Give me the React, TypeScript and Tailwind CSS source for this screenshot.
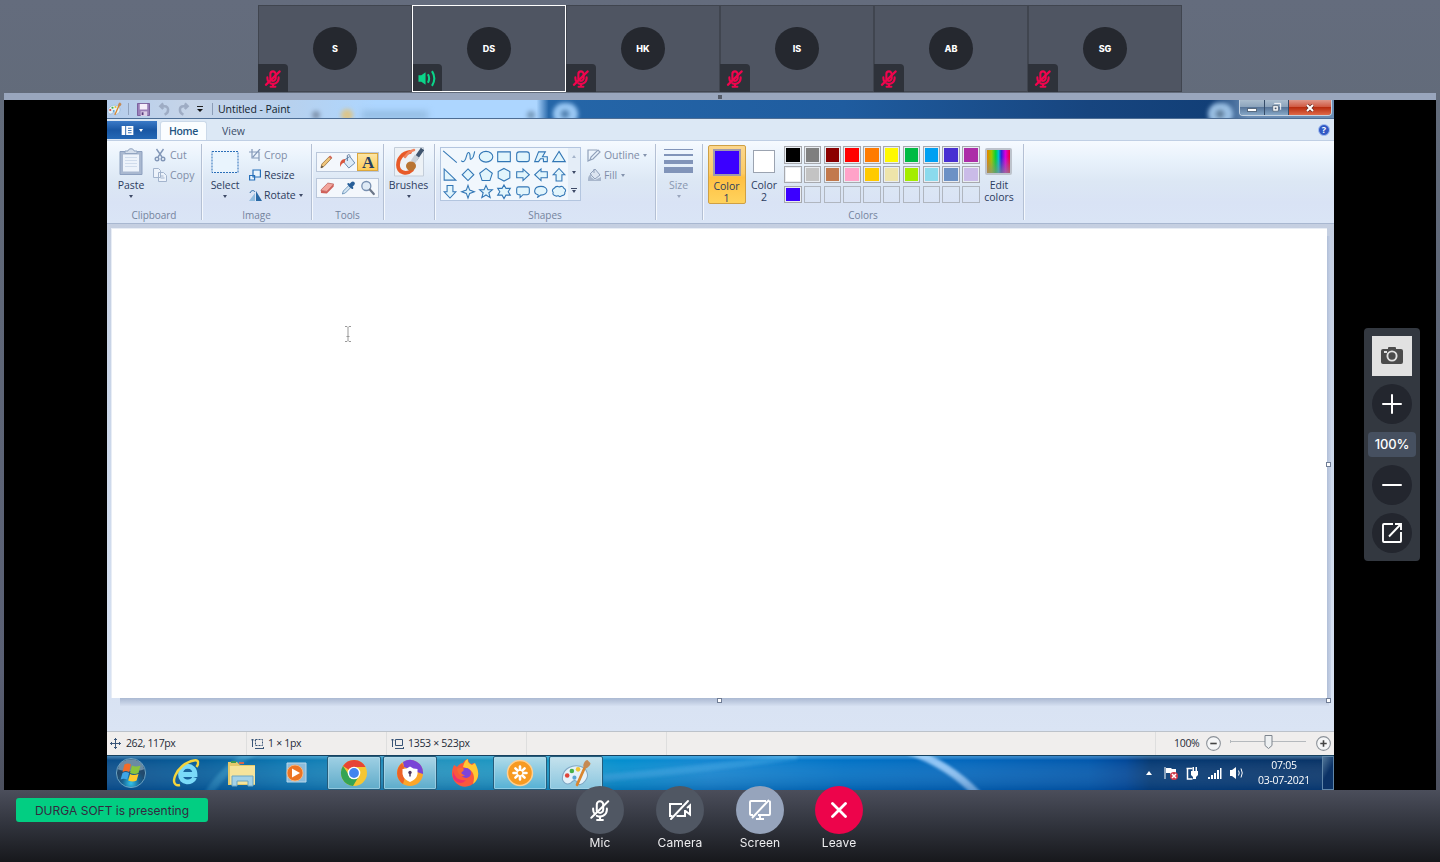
import type { ReactNode } from "react";

const PAINT_FONT = "font-['Open_Sans','Noto_Sans',sans-serif]";

function MicOff({ className, strokeWidth = 2 }: { className: string; strokeWidth?: number }) {
  return (
    <svg viewBox="0 0 24 24" fill="none" stroke="currentColor" strokeWidth={strokeWidth} strokeLinecap="round" className={className}>
      <path d="M8.5 13V6a3.5 3.5 0 0 1 7 0v5.5a3.5 3.5 0 0 1-5.5 3" />
      <path d="M4.5 10.5v1c0 2 .6 3.5 1.7 4.7M19.500 10.500v1.500a7.500 7.500 0 0 1-11 6.300" />
      <path d="M12 19.500V23M8.800 23h6.400M2.500 20.500 21 2.500" />
    </svg>
  );
}

function Tile({ name, active }: { name: string; active?: boolean }) {
  return (
    <div className={`relative flex h-[87px] w-[154px] items-center justify-center border bg-[#4f5562] ${active ? "border-white" : "border-[#40454f]"}`}>
      <div className="flex h-[43px] w-[44px] items-center justify-center rounded-full bg-[#25282f] pt-px text-[9px] font-extrabold text-white">
        {name}
      </div>
      <div className={`absolute flex items-center justify-center rounded-tr bg-[#2e323a] ${active ? "bottom-0 left-0 h-[27px] w-[29px] pr-[2px] pt-[2px]" : "-bottom-px -left-px h-[28px] w-[30px] pt-px"}`}>
        {active ? (
          <svg viewBox="0 0 20 18" className="h-[17px] w-[19px]" fill="none" stroke="#0bd489" strokeWidth="2.2">
            <path d="M1.500 5.500h3L9 2.500v13l-4.500-3h-3z" fill="#0bd489" stroke="none" />
            <path d="M11.500 4.500c1.600 2.800 1.600 6.200 0 9M15.800 1.200c3 4.700 3 10.900 0 15.600" />
          </svg>
        ) : (
          <MicOff className="h-[19px] w-[18px] text-[#f0054d]" strokeWidth={2.8} />
        )}
      </div>
    </div>
  );
}

function Arrow({ className = "border-t-[#3d4a66]" }: { className?: string }) {
  return <span className={`inline-block h-0 w-0 border-x-[2.5px] border-t-[3px] border-x-transparent ${className}`} />;
}

function Group({ label, width, children }: { label: string; width: string; children: ReactNode }) {
  return (
    <div className={`flex h-[76px] shrink-0 flex-col ${width} border-r border-[#b4c0d4] shadow-[1px_0_0_#f4f8fd]`}>
      <div className="flex h-[66px] items-start">{children}</div>
      <div className="flex h-[10px] items-center justify-center text-[10px] leading-none text-[#74839d]">{label}</div>
    </div>
  );
}

const shapes: ReactNode[] = [
  <path d="m2 3 14 12" />,
  <path d="M2 13c3 3 4.500-1 5.500-5s3-4.500 3.500-1-.5 6 2 4 2-6 3-7.500" />,
  <ellipse cx="9" cy="9" rx="7" ry="5.500" />,
  <path d="M2.500 4h13v10h-13z" />,
  <rect x="2.500" y="4" width="13" height="10" rx="2.500" />,
  <path d="M2.500 14 6.500 4h7l-3 5h5v5h-4v-3h-3l-2 3z" />,
  <path d="M9 3.500 15.500 14h-13z" />,
  <path d="M3 3v11.500h12z" />,
  <path d="m9 3 6 6-6 6-6-6z" />,
  <path d="m9 2.500 6.500 5L13 15H5L2.500 7.500z" />,
  <path d="m9 2.500 6 3.300v6.400l-6 3.300-6-3.300V5.800z" />,
  <path d="M2.500 6H9V3l6.500 6L9 15v-3H2.500z" />,
  <path d="M15.500 6H9V3L2.500 9 9 15v-3h6.500z" />,
  <path d="M6 15.500V9H3l6-6.500L15 9h-3v6.500z" />,
  <path d="M6 2.500V9H3l6 6.500L15 9h-3V2.500z" />,
  <path d="m9 2.500 1.700 4.800L15.500 9l-4.800 1.700L9 15.500l-1.700-4.800L2.500 9l4.800-1.700z" />,
  <path d="m9 2.500 2 4.500h4.500l-3.600 3 1.400 5L9 12.300 4.700 15l1.400-5-3.600-3H7z" />,
  <path d="m9 2 2 3.500h4.500L13.300 9l2.200 3.500H11L9 16l-2-3.500H2.500L4.700 9 2.500 5.500H7z" />,
  <path d="M4.500 4h9q2 0 2 2v4q0 2-2 2H9l-3 3v-3H4.500q-2 0-2-2V6q0-2 2-2z" />,
  <path d="M5 15c1-1 1.500-2 1-2.800C.5 10.500 1.500 3.500 9 3.500s9 8.500-.5 9C7.500 13 6.500 14.500 5 15z" />,
  <path d="M5 13q-3-.5-2-3.500Q1 7 4 5.500 6 2.500 9 4q4-1.500 5 1.500 3 1.500 1 4 .5 3-3 3.500-2 2-4 0-1.500 1-3 0z" />,
];

const swatches = [
  "bg-black", "bg-[#7f7f7f]", "bg-[#8b0000]", "bg-[#ff0000]", "bg-[#ff7b00]", "bg-[#fff900]", "bg-[#00bb44]", "bg-[#00a0f2]", "bg-[#472fd2]", "bg-[#ac2da8]",
  "bg-white", "bg-[#c3c3c3]", "bg-[#c2794d]", "bg-[#ffa2c8]", "bg-[#ffca00]", "bg-[#eee4aa]", "bg-[#a4ed00]", "bg-[#8bdaed]", "bg-[#6c91c5]", "bg-[#cabbe8]",
  "bg-[#3b00ff]", "", "", "", "", "", "", "", "", "",
];

function PaletteIcon({ className }: { className: string }) {
  return (
    <svg viewBox="0 0 30 28" className={className}>
      <path d="M2 17C3 9 12 5 19 7c7 2 9 9 5 14-3 4-7 5-8 2-1-4-4-2-6 0-4 3-9-1-8-6z" fill="#e4f1f9" stroke="#7fa7c4" />
      <circle cx="6.500" cy="16" r="2.200" fill="#e0453a" />
      <circle cx="11" cy="11.500" r="2.200" fill="#46b04a" />
      <circle cx="17" cy="10" r="2.200" fill="#f0c435" />
      <circle cx="13.500" cy="18" r="2" fill="#5aa4d4" />
      <path d="m24 7-8 18" stroke="#d9862f" strokeWidth="2.600" strokeLinecap="round" />
      <path d="M22 7c0-3 2-6 4-6l3 3c0 2-3 5-5 5z" fill="#c58a54" />
    </svg>
  );
}

function TitleBar() {
  return (
    <div className="relative flex h-[19px] items-center overflow-hidden border-b border-[#4d6d94] bg-[linear-gradient(90deg,#b5cdec_0,#c7d5e8_7%,#b7d1ee_15%,#add6ff_22%,#add6ff_35%,#2566a8_36%,#1f5c9f_60%,#17457f_80%,#123f77_90%,#6a8db5_93%)]">
      <div className="absolute left-[205px] top-[11px] h-2 w-2 rounded-full bg-[#7f93ad] blur-[2px]" />
      <div className="absolute left-[234px] top-[9px] h-3 w-3 rounded-full bg-[#dbc58b] blur-[2px]" />
      <div className="absolute left-[255px] top-[11px] h-2 w-[66px] bg-[#94bce2] blur-[3px]" />
      <div className="absolute left-[420px] top-[11px] h-2 w-2 rounded-full bg-[#7699bb] blur-[2px]" />
      <div className="absolute left-[446px] top-[3px] h-[22px] w-[25px] rounded-full bg-[#9bc9f5] blur-[2px]" />
      <div className="absolute left-[454px] top-[10px] h-2 w-2 rounded-full bg-[#507fae] blur-[2px]" />
      <div className="absolute left-[1101px] top-[3px] h-[22px] w-[25px] rounded-full bg-[#9bc0e4] blur-[2px]" />
      <div className="absolute left-[1109px] top-[10px] h-2 w-2 rounded-full bg-[#5f7d9a] blur-[2px]" />
      <div className="relative flex flex-1 items-center">
        <PaletteIcon className="h-[16px] w-[15px]" />
        <span className="ml-1.5 h-3 w-px bg-[#91a3be]" />
        <svg viewBox="0 0 14 14" className="ml-[8px] h-[13px] w-[13px]">
          <path d="M.5.500h13v13H.500z" fill="#9a7fb8" stroke="#765a97" />
          <path d="M3 1h8v6H3z" fill="#f6effb" /><path d="M4 9h7v5H4z" fill="#ddcfe8" /><path d="M5 10h2v3H5z" fill="#5a3a7d" />
        </svg>
        <svg viewBox="0 0 34 14" className="ml-2 h-3.5 w-[32px]" fill="none" stroke="#9eacc4" strokeWidth="2.600">
          <path d="M2 4h5c5 0 5 7 0 9M5.500 1 2.500 4l3 3M32 4h-5c-5 0-5 7 0 9M28.500 1l3 3-3 3" />
        </svg>
        <svg viewBox="0 0 8 8" className="ml-[6px] h-2 w-2"><path d="M1 1.500h6" stroke="#222" /><path d="M1 4h6L4 7z" fill="#111" /></svg>
        <span className="ml-[8px] h-3 w-px bg-[#8c9db7]" />
        <span className="ml-[5px] mt-px whitespace-nowrap text-[10.5px] font-medium leading-none tracking-[-0.05px] text-[#111d2c]">Untitled - Paint</span>
      </div>
      <div className="relative mr-[2px] flex h-4 self-start overflow-hidden rounded-b border border-t-0 border-[#c5d3e1]">
        <div className="flex w-[25px] items-center justify-center border-r border-[#354c69] bg-[linear-gradient(#aabdce_0,#8ca4bc_45%,#58769a_50%,#86a7c6)]"><span className="mt-1 h-1 w-[10px] border border-[#586b80] bg-white" /></div>
        <div className="flex w-6 items-center justify-center border-r border-[#354c69] bg-[linear-gradient(#aabdce_0,#8ca4bc_45%,#58769a_50%,#86a7c6)]">
          <svg viewBox="0 0 12 12" className="h-[11px] w-[11px]" fill="none"><path d="M3.500 1.500h7v7" stroke="#fff" /><path d="M2 4h6v6H2z" fill="#fff" stroke="#46586d" strokeWidth=".8" /><path d="M4 6h2v2H4z" fill="#46586d" /></svg>
        </div>
        <div className="flex w-[42px] items-center justify-center bg-[linear-gradient(#df978a_0,#d05a43_45%,#b92d10_50%,#df6948)]"><svg viewBox="0 0 10 8" className="h-2 w-[10px]"><path d="m2 1 6 6m0-6L2 7" stroke="#6c2d26" strokeWidth="3.500" /><path d="m2 1 6 6m0-6L2 7" stroke="#fff" strokeWidth="2" /></svg></div>
      </div>
    </div>
  );
}

function Ribbon() {
  return (
    <div className="flex h-[84px] items-start border-b border-[#a8b7d0] border-t border-t-[#c0cfe4] bg-[linear-gradient(#f6faff_0,#e7f1fb_25%,#dce7f4_50%,#d9e3f5_75%,#dae5f6)] pt-[3px] text-[10.5px] font-medium leading-none tracking-[-0.05px] text-[#2c3c5e]">
      <Group label="Clipboard" width="w-[95px]">
        <div className="ml-px flex w-[46px] flex-col items-center pt-[3px]">
          <svg viewBox="0 0 24 28" className="h-[29px] w-6">
            <path d="M1 4h22v23H1z" fill="#a9b8d0" stroke="#8da0bf" /><path d="M4 7h16v17H4z" fill="#edf3fb" /><path d="M6 10h12M6 13h12M6 16h12M6 19h12" stroke="#d0dcec" /><path d="M6 6V3.500h3C9 .5 15 .5 15 3.500h3V6z" fill="#d4deec" stroke="#91a4c0" />
          </svg>
          <span className="mt-1">Paste</span><Arrow className="mt-[4px] border-t-[#3d4a66]" />
        </div>
        <div className="flex flex-col text-[#7f8da7]">
          <div className="mt-[4px] flex h-[14px] items-center"><svg viewBox="0 0 12 14" className="h-3.5 w-3" fill="none" stroke="#8297b8" strokeWidth="1.400"><path d="M2.500 1 8 9M9.500 1 4 9" /><circle cx="3" cy="11" r="1.800" /><circle cx="9" cy="11" r="1.800" /></svg><span className="ml-1">Cut</span></div>
          <div className="mt-[6px] flex h-[14px] items-center"><svg viewBox="0 0 14 14" className="-ml-px h-3.5 w-[14px]" fill="#edf3fb" stroke="#a3b4cd"><path d="M.5.500h5l2 2v7h-7zM5.500 4.500h5l3 3v6h-8z" /><path d="M7.500 8h3M7.500 10h4" /></svg><span className="ml-[3px]">Copy</span></div>
        </div>
      </Group>
      <Group label="Image" width="w-[110px]">
        <div className="flex w-[46px] flex-col items-center pt-[6px]">
          <svg viewBox="0 0 28 24" className="h-6 w-7"><path d="M1 1.500h26v21H1z" fill="#e9f4fd" stroke="#2a6eb8" strokeDasharray="2 1" /></svg>
          <span className="mt-[6px]">Select</span><Arrow className="mt-[4px] border-t-[#3d4a66]" />
        </div>
        <div className="flex flex-col pl-px">
          <div className="mt-[4px] flex h-[14px] items-center text-[#7f8da7]"><svg viewBox="0 0 12 12" className="h-3 w-3" fill="none" stroke="#8499b8" strokeWidth="1.200"><path d="M3 0v9h7V3H0M4 8l7-8M10 9v3" /></svg><span className="ml-[3px]">Crop</span></div>
          <div className="mt-[6px] flex h-[14px] items-center"><svg viewBox="0 0 12 12" className="h-3 w-3" fill="#e9f4fd" stroke="#2770b9" strokeWidth="1.200"><path d="M4 1h7.400v7H4zM.6 6.500h5v4.500h-5z" /></svg><span className="ml-[3px]">Resize</span></div>
          <div className="mt-[6px] flex h-[14px] items-center"><svg viewBox="0 0 14 13" className="h-[13px] w-[14px]"><path d="M6 4v8H0z" fill="#91bddf" /><path d="M7 2v10h6z" fill="#2869a5" /><path d="M1 4c1-3 4-3 5-1" fill="none" stroke="#2869a5" /></svg><span className="ml-px">Rotate</span><Arrow className="ml-[3px] border-t-[#3d4a66]" /></div>
        </div>
      </Group>
      <Group label="Tools" width="w-[72px]">
        <div className="flex flex-col gap-[6px] pl-1 pt-2">
          <div className="flex h-[20px] w-[63px] border border-[#bac7da] bg-[#f3f7fc]">
            <svg viewBox="0 0 20 18" className="h-[18px] w-5"><path d="m4 15 1-4 8-8 2 2-8 8.500z" fill="#efc57b" stroke="#96703b" strokeWidth=".8" /><path d="m4 15 .8-2.500L6.500 14z" fill="#444" /><path d="m12 4 1.500-1.500 2 2L14 6z" fill="#d46a5c" /></svg>
            <svg viewBox="0 0 20 18" className="h-[18px] w-[21px]"><path d="m5.500 8 7-4.500 5 6.500-6 5z" fill="#dcebf8" stroke="#6f8db0" /><path d="M10 8V3c0-2 3-1.500 3 .5" fill="none" stroke="#5b799e" /><path d="M8 6C4 6 2 9 3 14c1-3 2-4 4.500-4.500z" fill="#da573e" /></svg>
            <div className="flex w-[21px] items-center justify-center border border-[#dba73d] bg-[linear-gradient(#fce5a4,#ffcb55)] pl-px pt-px font-['Liberation_Serif',serif] text-[17px] font-bold text-[#263e60]">A</div>
          </div>
          <div className="flex h-[20px] w-[63px] border border-[#bac7da] bg-[#f3f7fc]">
            <svg viewBox="0 0 20 18" className="h-[18px] w-5"><path d="m4 11 7-7 6 1-7 7.500-6-1z" fill="#f3a59c" stroke="#bd6661" strokeWidth=".8" /><path d="m4 11.500 6 1 7-7.500v2.500l-7 7-6-.5z" fill="#cf6059" /></svg>
            <svg viewBox="0 0 20 18" className="h-[18px] w-[21px]"><path d="m5 15 1-3 6-6 2 2-6 6z" fill="#d3e5f3" stroke="#6c94b9" strokeWidth=".9" /><path d="m11 5 4 4" stroke="#285f99" strokeWidth="2" strokeLinecap="round" /><path d="m13.500 6.500 2-2" stroke="#285f99" strokeWidth="4" strokeLinecap="round" /></svg>
            <svg viewBox="0 0 20 18" className="h-[18px] w-[21px]"><circle cx="9" cy="7" r="4.500" fill="#dfeaf5" stroke="#7890b1" strokeWidth="1.300" /><path d="m12.500 10.500 4 4.500" stroke="#6c7789" strokeWidth="2.200" strokeLinecap="round" /></svg>
          </div>
        </div>
      </Group>
      <Group label="" width="w-[51px]">
        <div className="flex w-[49px] flex-col items-center pt-[3px]">
          <svg viewBox="0 0 30 30" className="h-[30px] w-[30px]"><path d="M.5.500h29v28.500H.500z" fill="#edf2f6" stroke="#c3cdd9" /><path d="M16 5C8 6 4 12 4 18c0 8 9 10 14 5" fill="none" stroke="#e85a28" strokeWidth="3.800" strokeLinecap="round" /><path d="M20 3c-5 1-7 4-9 7" fill="none" stroke="#f0845e" strokeWidth="2.500" strokeLinecap="round" /><path d="m28.500 2-7 10" stroke="#41566f" strokeWidth="4" /><path d="m23 9-4 6" stroke="#c9d1d9" strokeWidth="5" /><ellipse cx="17" cy="19" rx="5" ry="4.500" fill="#b97532" /></svg>
          <span className="mt-[3px]">Brushes</span><Arrow className="mt-[4px] border-t-[#3d4a66]" />
        </div>
      </Group>
      <Group label="Shapes" width="w-[221px]">
        <div className="ml-[5px] mt-[3px] flex h-[54px] w-[141px] border border-[#b3c5df] bg-[#f1f7fd]">
          <div className="grid w-[127px] grid-cols-7">
            {shapes.map((s, i) => (
              <svg key={i} viewBox="0 0 18 18" className="h-[17.5px] w-[18px]" fill="#e2f5fc" stroke="#3276b5" strokeWidth="1.100">{s}</svg>
            ))}
          </div>
          <div className="flex w-3 flex-col items-center justify-around bg-[#e4edf7]">
            <Arrow className="rotate-180 border-t-[#a5b4ca]" /><Arrow /><span className="flex flex-col items-center gap-px"><i className="h-px w-[6px] bg-[#3d4a66]" /><Arrow /></span>
          </div>
        </div>
        <div className="flex flex-col pl-[6px] text-[#7f8da7]">
          <div className="mt-[4px] flex h-[14px] items-center"><svg viewBox="0 0 14 13" className="h-[13px] w-[14px]" fill="none" stroke="#91a1ba" strokeWidth="1.200"><path d="M10 1H1v11l2-1" /><path d="m3 11 1-3 7-7 2 2-7 7z" /></svg><span className="ml-[3px]">Outline</span><Arrow className="ml-[3px] border-t-[#8493ad]" /></div>
          <div className="mt-[6px] flex h-[14px] items-center"><svg viewBox="0 0 15 14" className="h-3.5 w-[15px]" fill="#dce5f1" stroke="#91a1ba"><path d="m3 6 5-5 5 6-5 4zM7 5V1" /><path d="M1 11c0-3 2-5 4-5l-1 3 4 3 6-3v4H1z" fill="#a9b7cc" stroke="none" /></svg><span className="ml-[2px]">Fill</span><Arrow className="ml-1 border-t-[#8493ad]" /></div>
        </div>
      </Group>
      <Group label="" width="w-[47px]">
        <div className="flex w-[45px] flex-col items-center pt-[4px] text-[#8997b0]">
          <div className="flex h-[29px] w-[29px] flex-col"><i className="mt-px h-px bg-[#8194b9]" /><i className="mt-[4px] h-[2px] bg-[#8194b9]" /><i className="mt-[4px] h-[4px] bg-[#8194b9]" /><i className="mt-[3px] h-[6px] bg-[#8194b9]" /></div>
          <span className="mt-[3px]">Size</span><Arrow className="mt-[4px] border-t-[#9aa6bd]" />
        </div>
      </Group>
      <Group label="Colors" width="w-[321px]">
        <div className="ml-[5px] mt-px flex h-[59px] w-[38px] shrink-0 flex-col items-center rounded-[2px] border border-[#cfa044] bg-[linear-gradient(#fbd78e_0,#fcca65_48%,#ffc043_55%,#ffd35d)] pr-px pt-[3px]">
          <div className="h-[28px] w-[28px] border-2 border-[#a09aaa] bg-[#3b00ff]" />
          <span className="mt-[5px]">Color</span><span className="mt-px">1</span>
        </div>
        <div className="flex w-[36px] shrink-0 flex-col items-center pt-[6px]">
          <div className="h-[23px] w-[22px] border border-[#9ba3b0] bg-white" />
          <span className="mt-[7px]">Color</span><span className="mt-px">2</span>
        </div>
        <div className="ml-[2px] mt-[2px] grid grid-cols-[repeat(10,19.8px)] gap-y-[2.3px]">
          {swatches.map((c, i) => (
            <div key={i} className={`h-[17.5px] w-[17.5px] border p-px ${c ? "border-[#a7a9ae] bg-[#e9edf2]" : "border-[#b0b6bf]"}`}><div className={`h-full w-full ${c}`} /></div>
          ))}
        </div>
        <div className="flex w-[34px] flex-col items-center pt-1">
          <div className="h-[27px] w-[27px] rounded-[2px] border-2 border-[#bdc3cc] bg-[linear-gradient(180deg,transparent_30%,#8c8c8caa),linear-gradient(90deg,#e98100,#9ac700_20%,#00d23b_38%,#00bfcf_50%,#2c22d8_62%,#db00df_80%,#ef0030)]" />
          <span className="mt-[5px]">Edit</span><span className="mt-px">colors</span>
        </div>
      </Group>
    </div>
  );
}

function StatusBar() {
  return (
    <div className="flex h-[24px] items-center border-t border-[#bcc2ca] bg-[#f0eeed] text-[10.5px] font-medium leading-none text-[#252b38]">
      <div className="flex h-full w-[140px] items-center border-r border-[#dedede] pl-[3px]">
        <svg viewBox="0 0 11 11" className="h-[11px] w-[11px]" stroke="#385477" fill="none"><path d="M5.500 0v11M0 5.500h11M4 2l1.500-1.500L7 2M4 9l1.500 1.500L7 9M2 4 .5 5.500 2 7M9 4l1.500 1.500L9 7" /></svg>
        <span className="ml-[5px] tracking-[-0.4px]">262, 117px</span>
      </div>
      {["1 × 1px", "1353 × 523px"].map((t, i) => (
        <div key={t} className="flex h-full w-[140px] items-center border-r border-[#dedede] pl-[4px]">
          <svg viewBox="0 0 13 11" className="h-[11px] w-[13px]" stroke="#385477" fill="none"><path d="M1.500 9V1M0 2.500 1.500 1 3 2.500M4 10.500h8" /><path d="M4.500 1.500h7v6h-7z" strokeDasharray={i ? undefined : "2 1"} /><path d="M12.500 9v2" /></svg>
          <span className="ml-1 tracking-[-0.3px]">{t}</span>
        </div>
      ))}
      <div className="h-full w-[140px] border-r border-[#dedede]" />
      <div className="h-full flex-1 border-r border-[#dedede]" />
      <div className="flex w-[178px] items-center pl-[18px]">
        <span className="w-[27px] tracking-[-0.3px]">100%</span>
        <svg viewBox="0 0 14 14" className="ml-[5px] h-[15px] w-[15px]" fill="#f5f6f7" stroke="#8b9198"><circle cx="7" cy="7" r="6.400" /><path d="M4 7h6" stroke="#444" strokeWidth="1.500" /></svg>
        <svg viewBox="0 0 76 16" className="-mt-[3px] ml-[9px] h-4 w-[76px]"><path d="M.5 6v3M0 7.500h76" stroke="#b5b9bd" /><path d="M35 1.500h7v10l-3.500 3-3.500-3z" fill="#edf0f2" stroke="#7d848d" /></svg>
        <svg viewBox="0 0 14 14" className="ml-[10px] h-[15px] w-[15px]" fill="#f5f6f7" stroke="#8b9198"><circle cx="7" cy="7" r="6.400" /><path d="M4 7h6M7 4v6" stroke="#444" strokeWidth="1.500" /></svg>
      </div>
    </div>
  );
}

function TaskButton({ children, className }: { children: ReactNode; className: string }) {
  return <div className={`flex h-[34px] w-[54px] items-center justify-center rounded-[2px] border border-[#245c7b] shadow-[inset_0_0_0_1px_#b4dcec99] ${className}`}>{children}</div>;
}

function Taskbar() {
  return (
    <div className="relative flex h-[35px] items-center border-t border-[#17415f] bg-[linear-gradient(90deg,#0c4f8b_0,#075f9c_8%,#0e7ab4_15%,#2692bd_25%,#1b9ac5_35%,#058fcf_42%,#1687d2_49%,#0373c6_60%,#0568bd_70%,#0359ad_80%,#03499a_83%,#063a74_85%,#0a3467_100%)]">
      <svg viewBox="0 0 1227 34" className="absolute inset-0 h-[34px] w-full" preserveAspectRatio="none">
        <defs>
          <linearGradient id="shade" x2="0" y2="1"><stop offset="0" stopColor="#9fe0ff" stopOpacity=".35" /><stop offset=".12" stopColor="#fff" stopOpacity="0" /><stop offset="1" stopColor="#003b80" stopOpacity=".3" /></linearGradient>
          <filter id="soft" x="-20%" y="-50%" width="140%" height="200%"><feGaussianBlur stdDeviation="1.7" /></filter>
        </defs>
        <g fill="none" filter="url(#soft)">
          <path d="M800-6q42 14 72 46" stroke="#8fc4f5" strokeWidth="8" />
          <path d="M496 22Q590 14 690 0" stroke="#3aa2e2" strokeWidth="7" opacity=".55" />
          <path d="M100 40q18-30 50-46" stroke="#4ab0d8" strokeWidth="8" opacity=".4" />
        </g>
        <path d="M0 0h1227v34H0z" fill="url(#shade)" />
      </svg>
      <div className="relative flex w-full items-center">
        <svg viewBox="0 0 34 34" className="ml-[7px] h-8 w-[34px]">
          <defs><radialGradient id="orb" cy=".85"><stop stopColor="#32c4ec" /><stop offset=".6" stopColor="#166090" /><stop offset="1" stopColor="#224a6d" /></radialGradient></defs>
          <circle cx="17" cy="17" r="15.500" fill="url(#orb)" stroke="#6ea5c4" /><path d="M3 13C6-1 28-1 31 13c-8 3-20 3-28 0z" fill="#d9eef8" opacity=".4" />
          <path d="M10 8q4-2 7 0l-2 8q-3-2-7 0z" fill="#f36b27" /><path d="M18 9q4 2 9 0l-2 8q-4 2-9 0z" fill="#8ac43d" /><path d="M8 17q3-2 7 0l-2 7q-4-2-7 0z" fill="#3ea5e7" /><path d="M16 18q3 2 9 0l-2 7q-4 2-9 0z" fill="#fec82e" />
        </svg>
        <svg viewBox="0 0 30 30" className="ml-[23px] h-[30px] w-[30px]"><path d="M23.500 19.500c-2 6-14 6.500-14-3 0-11 14.500-11 14.500 0H10" fill="none" stroke="#7adaf9" strokeWidth="4.800" /><path d="M9 27C-3 30 4 6 23 2.500c5-1 5 3 2.500 6.500" fill="none" stroke="#f5d43b" strokeWidth="2.400" /></svg>
        <svg viewBox="0 0 30 28" className="ml-[26px] h-7 w-[30px]"><path d="M1 3h9l3 3h15v20H1z" fill="#e5ca6b" /><path d="M3 7h25v18H3z" fill="#f5e49c" /><path d="M4 3h5" stroke="#3c9950" strokeWidth="2" /><path d="M12 4h5" stroke="#d6644b" strokeWidth="2" /><path d="M5 27V17h21v10h-5v-5H10v5z" fill="#a3d2e8" stroke="#6aa6c4" /></svg>
        <svg viewBox="0 0 24 24" className="ml-[27px] h-6 w-6"><path d="M3 2h19v19H3z" fill="#8bbcdc" stroke="#b8d7e9" /><circle cx="11" cy="12" r="8" fill="#ec7423" stroke="#f5b67f" /><path d="m8 7.500 8 4.500-8 4.500z" fill="#fff" /></svg>
        <TaskButton className="ml-[19px] bg-[linear-gradient(#9fd0e4,#5fabc9)]">
          <svg viewBox="0 0 28 28" className="h-[28px] w-[28px]"><circle cx="14" cy="14" r="13" fill="#f5c632" /><path d="M3 7a13 13 0 0 1 22.500 1H14v6z" fill="#e64435" /><path d="M3 7a13 13 0 0 0 10 20l6-10-10-1z" fill="#35a454" /><circle cx="14" cy="14" r="6.300" fill="#fff" /><circle cx="14" cy="14" r="4.900" fill="#4285ef" /></svg>
        </TaskButton>
        <TaskButton className="ml-[2px] bg-[linear-gradient(#abd5e7,#5baccb)]">
          <svg viewBox="0 0 28 28" className="h-7 w-7"><circle cx="14" cy="14" r="13" fill="#fba62a" /><path d="M7 3a13 13 0 0 1 20 12l-6-2L8 8z" fill="#7944d7" /><path d="M6 4a13 13 0 0 0 1 21l2-7-1-10z" fill="#ed6227" /><path d="M6.500 10q4.500 0 7.500-2.500 3 2.500 7.500 2.500v5q-1 5.500-7.500 8-6.500-2.500-7.500-8z" fill="#fff" /><circle cx="14" cy="13.500" r="1.700" fill="#4d3960" /><path d="M14 13.500v4" stroke="#4d3960" strokeWidth="1.500" /></svg>
        </TaskButton>
        <svg viewBox="0 0 28 28" className="ml-[14px] h-7 w-7"><path d="M3 6q2 1 3 2 3-4 6-4 1-3 5-4 0 3 3 5l3-1c5 7 6 14 1 19-5 6-14 6-19 1C-1 18 1 10 3 6z" fill="#fa583c" /><path d="M17 0q-1 4 4 6l3-2c5 9 4 17-2 21 3-10-1-15-10-17 1-4 2-7 5-8z" fill="#ffc834" /><path d="M2 12c2 7 6 10 13 9-4 5-10 3-13-2z" fill="#ee306e" /><circle cx="15" cy="14" r="5" fill="#7d44d9" /><path d="M6 10q5-3 7 1l-3 3 4 3q-7 1-8-7z" fill="#f86b32" /></svg>
        <TaskButton className="ml-[14px] bg-[linear-gradient(#b0dbe9,#55b1d5)]">
          <svg viewBox="0 0 28 28" className="h-7 w-7"><circle cx="14" cy="14" r="12.500" fill="#f79a21" stroke="#ffd091" strokeWidth="1.500" /><g stroke="#fff" strokeWidth="2.600" strokeLinecap="round"><path d="M14 7.500v3.200M14 17.300v3.200M7.500 14h3.200M17.300 14h3.200M9.400 9.400l2.300 2.300M16.300 16.300l2.300 2.300M18.600 9.400l-2.300 2.300M11.700 16.300l-2.300 2.300" /></g></svg>
        </TaskButton>
        <TaskButton className="ml-[2px] bg-[linear-gradient(#c5e2ed,#8ac6df)]"><PaletteIcon className="h-[29px] w-[32px]" /></TaskButton>
        <div className="flex-1" />
        <span className="h-0 w-0 border-x-[3.5px] border-b-[4px] border-x-transparent border-b-white" />
        <svg viewBox="0 0 82 18" className="ml-[12px] h-[18px] w-[82px]" fill="#fff">
          <path d="M1 3v12" stroke="#fff" /><path d="M2 4h5l1 1h4v6H7L6 9H2z" /><circle cx="10" cy="12" r="4" fill="#ce394a" /><path d="m8 10 4 4m0-4-4 4" stroke="#fff" strokeWidth="1.500" />
          <path d="M22.500 4.500h6M23.500 4v11h5" fill="none" stroke="#fff" strokeWidth="1.500" /><path d="M27 7h7v4l-2 2v2h-3v-2l-2-2zM28.500 3H30v4h-1.500zM31.500 3H33v4h-1.500z" />
          <path d="M44 13h2v2h-2zM47 11h2v4h-2zM50 9h2v6h-2zM53 6h2v9h-2zM56 4h1.500v11H56z" />
          <path d="M66 6h2l4-3v12l-4-3h-2z" /><path d="M74.500 6.500q1.500 2.500 0 5M77 4.500q2.500 4.500 0 9" stroke="#fff" fill="none" />
        </svg>
        <div className="ml-[8px] flex w-[60px] flex-col items-center gap-[4px] text-[10.5px] leading-[11px] text-white"><span className="tracking-[-0.3px]">07:05</span><span className="whitespace-nowrap tracking-[-0.3px]">03-07-2021</span></div>
        <div className="ml-[8px] h-[34px] w-[12px] border border-[#6086a8] bg-[linear-gradient(120deg,#527799,#0b3266_50%)]" />
      </div>
    </div>
  );
}

function Paint() {
  return (
    <div className={`flex h-[690px] w-[1227px] flex-col ${PAINT_FONT}`}>
      <TitleBar />
      <div className="flex h-[21px] items-end bg-[#dce8f5]">
        <div className="mb-px flex h-[18px] w-[50px] items-center justify-center gap-[5px] bg-[linear-gradient(#3b7ac7,#1957a4_50%,#2468b5)]">
          <svg viewBox="0 0 13 10" className="h-[9px] w-[13px]" fill="#fff"><path d="M0 0h4v10H0zM5 0h8v10H5z" /><path d="M7 2.500h4M7 5h4M7 7.500h4" stroke="#2868b0" /></svg>
          <Arrow className="border-t-white" />
        </div>
        <div className="ml-[3px] flex h-[19px] w-[47px] items-center justify-center rounded-t-[3px] border border-b-0 border-[#cbd9e9] bg-[#fafdff] pt-px text-[10.5px] font-semibold leading-none tracking-[-0.4px] text-[#225481]">Home</div>
        <span className="mb-[4px] ml-[15px] text-[10.5px] font-medium leading-none text-[#3b4e6a]">View</span>
        <div className="mb-[4px] ml-auto mr-[4px] flex h-3 w-3 items-center justify-center rounded-full border border-[#a6c1f2] bg-[#3159c4] text-[9px] font-bold text-white">?</div>
      </div>
      <Ribbon />
      <div className="relative h-[507px] bg-[linear-gradient(#c5cfe1_0,#cad6e9_35%,#dae4f4_100%)] pl-[4px] pt-[4px]">
        <div className="h-[470px] w-[1216px] border-l border-t border-[#e8edf5] bg-white" />
        <div className="ml-[9px] h-[8px] w-[1209px] bg-[linear-gradient(#abb9d2,#c0cce1_50%,#d6e0f1)]" />
        <div className="absolute left-[1220px] top-[12px] h-[467px] w-[4px] bg-[linear-gradient(90deg,#b1bfd8,#c8d3e7)]" />
        <svg viewBox="0 0 8 16" className="absolute left-[237px] top-[102px] h-4 w-2" fill="none" stroke="#999"><path d="M1 .5h2l1 1 1-1h2M1 15.500h2l1-1 1 1h2M4 1.500v13M2.500 10.500h3" /></svg>
        {["left-[610px] top-[474px]", "left-[1219px] top-[474px]", "left-[1219px] top-[238px]"].map((p) => (
          <span key={p} className={`absolute h-[5px] w-[5px] border border-[#707d95] bg-white ${p}`} />
        ))}
      </div>
      <StatusBar />
      <Taskbar />
    </div>
  );
}

function ZoomPanel() {
  const round = "flex h-10 w-10 items-center justify-center rounded-full bg-[#23262e]";
  return (
    <div className="ml-[30px] mt-[228px] flex h-[233px] w-[56px] flex-col items-center gap-2 rounded bg-[#333840] pt-2">
      <div className="flex h-10 w-10 items-center justify-center bg-[#e1e1e1]">
        <svg viewBox="0 0 24 20" className="h-[20px] w-6"><path d="M1 5q0-2 2-2h5V2q0-1 1-1h6q1 0 1 1v1h5q2 0 2 2v11q0 2-2 2H3q-2 0-2-2z" fill="#4b4b4b" /><circle cx="12" cy="10" r="4.600" fill="#4b4b4b" stroke="#e1e1e1" strokeWidth="1.900" /><path d="M4 6h3" stroke="#e1e1e1" strokeWidth="2" /></svg>
      </div>
      <div className={round}><svg viewBox="0 0 20 20" className="h-5 w-5" stroke="#fff" strokeWidth="2" strokeLinecap="round"><path d="M10 1v18M1 10h18" /></svg></div>
      <div className="flex h-[25px] w-[48px] items-center justify-center rounded bg-[#465060] pt-px text-[13px] font-medium tracking-[-0.2px] text-white">100%</div>
      <div className={round}><svg viewBox="0 0 20 20" className="h-5 w-5" stroke="#fff" strokeWidth="2" strokeLinecap="round"><path d="M1 10h18" /></svg></div>
      <div className={round}><svg viewBox="0 0 22 22" className="h-[22px] w-[22px]" fill="none" stroke="#fff" strokeWidth="1.900"><path d="M12 2H3q-1 0-1 1v16q0 1 1 1h16q1 0 1-1v-9M8 14.500 19 3M14 2h6v6" /></svg></div>
    </div>
  );
}

function Control({ label, className, children }: { label: string; className: string; children: ReactNode }) {
  return (
    <div className="flex w-[48px] flex-col items-center">
      <div className={`flex h-12 w-12 items-center justify-center rounded-full ${className}`}>{children}</div>
      <span className="mt-[2px] text-[12px] leading-[14px] tracking-[0.1px] text-[#eeeef0]">{label}</span>
    </div>
  );
}

export default function App() {
  return (
    <div className="flex h-[862px] w-[1440px] flex-col overflow-hidden bg-[linear-gradient(#646c7d_0,#626b7a_12%,#5a6074_78%,#4c505e_91.500%)] font-['Inter',sans-serif]">
      <div className="flex h-[93px] justify-center pt-[5px]">
        {["S", "DS", "HK", "IS", "AB", "SG"].map((n) => <Tile key={n} name={n} active={n === "DS"} />)}
      </div>
      <div className="mx-1 flex h-[7px] items-center justify-center bg-[#99a6bd]"><span className="h-1 w-1 bg-[#555c69]" /></div>
      <div className="mx-1 flex h-[690px] bg-black pl-[103px]">
        <Paint />
        <ZoomPanel />
      </div>
      <div className="relative z-10 flex h-[72px] bg-[linear-gradient(#4b4e5b,#30333c_50%,#17181c)]">
        <div className="ml-4 mt-2 flex h-6 w-[192px] items-center justify-center rounded-[3px] bg-[#02ce82] pt-px text-[12px] tracking-[0.02px] text-[#35283f]">DURGA SOFT is presenting</div>
        <div className="-mt-1 ml-[368px] flex gap-8">
          <Control label="Mic" className="bg-[#505763] text-white"><MicOff className="h-[24px] w-[22px]" strokeWidth={2.2} /></Control>
          <Control label="Camera" className="bg-[#505763] text-white">
            <svg viewBox="0 0 24 22" className="h-[22px] w-6" fill="none" stroke="currentColor" strokeWidth="2"><path d="M14 5H2v12h2.500M8.500 17H17v-6M17.500 12l4.500 3.500v-9L19 9" /><path d="M3 20 20 2" strokeLinecap="round" /></svg>
          </Control>
          <Control label="Screen" className="bg-[#96a4bc] text-white">
            <svg viewBox="0 0 24 24" className="h-6 w-6" fill="none" stroke="currentColor" strokeWidth="1.900"><path d="M18 3H3q-1 0-1 1v12q0 1 1 1h2M10 17h11q1 0 1-1V4q0-1-2-1M12 17v4M8 21h8M4 20 21 2" /></svg>
          </Control>
          <div className="-ml-px"><Control label="Leave" className="bg-[#ed044b] text-white">
            <svg viewBox="0 0 16 16" className="h-4 w-4" stroke="currentColor" strokeWidth="2.800" strokeLinecap="round"><path d="m1.500 1.500 13 13m0-13-13 13" /></svg>
          </Control></div>
        </div>
      </div>
    </div>
  );
}
